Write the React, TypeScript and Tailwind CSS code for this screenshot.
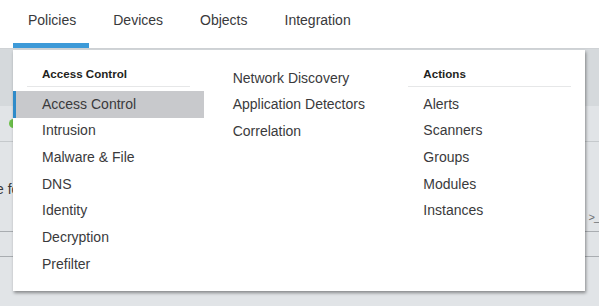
import React from 'react'

const navItems = ['Policies', 'Devices', 'Objects', 'Integration']

// ドロップダウンの各列
const columns: { heading?: string; items: string[] }[] = [
  {
    heading: 'Access Control',
    items: ['Access Control', 'Intrusion', 'Malware & File', 'DNS', 'Identity', 'Decryption', 'Prefilter'],
  },
  { items: ['Network Discovery', 'Application Detectors', 'Correlation'] },
  { heading: 'Actions', items: ['Alerts', 'Scanners', 'Groups', 'Modules', 'Instances'] },
]

function MenuColumn({ heading, items, col }: { heading?: string; items: string[]; col: number }) {
  return (
    <div className={heading ? '' : 'pt-[14.7px]'}>
      {heading && (
        <div className="mx-[14px] px-[15px] pt-[16px] pb-[4px] mb-[4px] border-b border-[#e6e7e8] text-[11.6px] leading-[16px] font-bold text-[#1f1f21]">
          {heading}
        </div>
      )}
      {items.map((item, i) => {
        const active = col === 0 && i === 0
        return (
          <div
            key={item}
            className={`h-[26.67px] flex items-center text-[14px] text-[#3a3a3c] ${
              active ? 'bg-[#c8c9cc] border-l-[3px] border-[#2f8bc9] pl-[26px]' : 'pl-[29px]'
            }`}
          >
            {item}
          </div>
        )
      })}
    </div>
  )
}

export default function App() {
  return (
    <div className="relative w-[599px] h-[306px] overflow-hidden bg-[#e1e4e7] font-['Liberation_Sans',Arial,sans-serif]">
      {/* ナビゲーションバー */}
      <div className="h-[49px] bg-white border-b border-[#cfd2d5] flex pl-[13px] gap-[7px]">
        {navItems.map((n, i) => (
          <div
            key={n}
            className={`px-[15px] pt-[11px] text-[14px] leading-[18px] text-[#39393b] border-b-[5px] ${
              i === 0 ? 'border-[#3d9ad8] pr-[13px] mr-[2px]' : 'border-transparent'
            }`}
          >
            {n}
          </div>
        ))}
      </div>

      {/* 下にあるページ内容 */}
      <div className="h-[57px] bg-[#d5d9dc]" />
      <div className="h-[36px] border-b border-[#c5c9cc] flex items-center">
        <span className="ml-[9px] w-[9px] h-[9px] rounded-full bg-[#6cbf4a]" />
      </div>
      <div className="h-[90px] border-b border-[#a9adb1] flex justify-between pt-[39px] pb-[6px]">
        <span className="-ml-[4px] text-[14px] leading-[16px] text-[#39393b]">e fo</span>
        <span className="self-end text-[11px] text-[#6b6e72] tracking-[-1px]">&gt;_</span>
      </div>
      <div className="h-[25px] border-b border-[#a9adb1]" />

      {/* ドロップダウン（他の内容の上に重なる） */}
      <div className="absolute left-[13px] top-[50px] w-[572px] h-[241px] bg-white grid grid-cols-3 shadow-[1px_2px_3px_rgba(0,0,0,0.4)]">
        {columns.map((c, i) => (
          <MenuColumn key={i} heading={c.heading} items={c.items} col={i} />
        ))}
      </div>
    </div>
  )
}
